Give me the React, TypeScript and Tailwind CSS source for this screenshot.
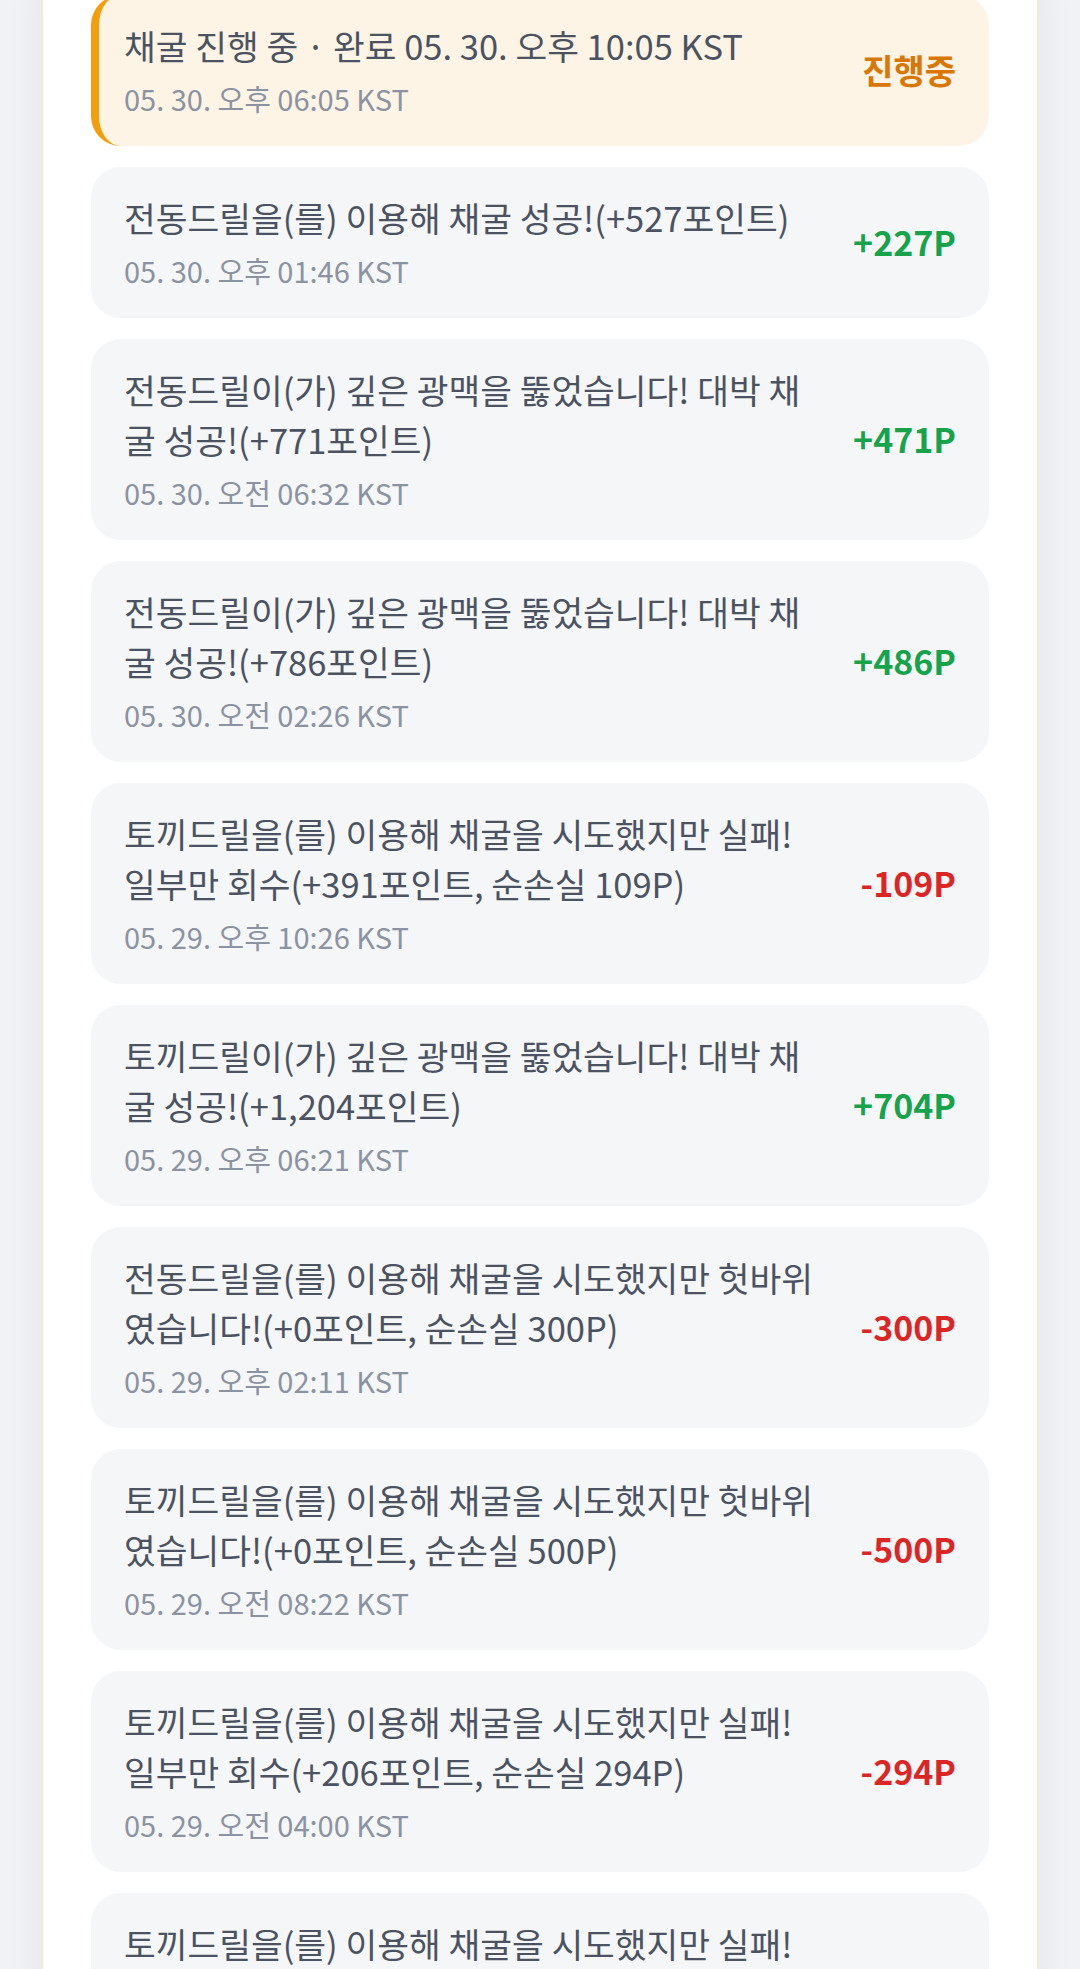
type Log = {
  id: number
  text: string
  time: string
  amount: string
  tone: 'pending' | 'plus' | 'minus'
}

const logs: Log[] = [
  { id: 1, text: '채굴 진행 중 · 완료 05. 30. 오후 10:05 KST', time: '05. 30. 오후 06:05 KST', amount: '진행중', tone: 'pending' },
  { id: 2, text: '전동드릴을(를) 이용해 채굴 성공!(+527포인트)', time: '05. 30. 오후 01:46 KST', amount: '+227P', tone: 'plus' },
  { id: 3, text: '전동드릴이(가) 깊은 광맥을 뚫었습니다! 대박 채굴 성공!(+771포인트)', time: '05. 30. 오전 06:32 KST', amount: '+471P', tone: 'plus' },
  { id: 4, text: '전동드릴이(가) 깊은 광맥을 뚫었습니다! 대박 채굴 성공!(+786포인트)', time: '05. 30. 오전 02:26 KST', amount: '+486P', tone: 'plus' },
  { id: 5, text: '토끼드릴을(를) 이용해 채굴을 시도했지만 실패! 일부만 회수(+391포인트, 순손실 109P)', time: '05. 29. 오후 10:26 KST', amount: '-109P', tone: 'minus' },
  { id: 6, text: '토끼드릴이(가) 깊은 광맥을 뚫었습니다! 대박 채굴 성공!(+1,204포인트)', time: '05. 29. 오후 06:21 KST', amount: '+704P', tone: 'plus' },
  { id: 7, text: '전동드릴을(를) 이용해 채굴을 시도했지만 헛바위였습니다!(+0포인트, 순손실 300P)', time: '05. 29. 오후 02:11 KST', amount: '-300P', tone: 'minus' },
  { id: 8, text: '토끼드릴을(를) 이용해 채굴을 시도했지만 헛바위였습니다!(+0포인트, 순손실 500P)', time: '05. 29. 오전 08:22 KST', amount: '-500P', tone: 'minus' },
  { id: 9, text: '토끼드릴을(를) 이용해 채굴을 시도했지만 실패! 일부만 회수(+206포인트, 순손실 294P)', time: '05. 29. 오전 04:00 KST', amount: '-294P', tone: 'minus' },
  { id: 10, text: '토끼드릴을(를) 이용해 채굴을 시도했지만 실패! 일부만 회수(+152포인트, 순손실 348P)', time: '05. 28. 오후 11:47 KST', amount: '-348P', tone: 'minus' },
]

function LogItem({ log }: { log: Log }) {
  const pending = log.tone === 'pending'
  return (
    <div
      className={`flex items-center gap-8 rounded-[30px] border-l-[8px] pt-[25px] pb-[27px] pl-[25px] pr-[33px] ${
        pending ? 'border-[#f59e0b] bg-[#fef4e6]' : 'border-transparent bg-[#f5f6f8]'
      }`}
    >
      <div className="min-w-0 max-w-[694px] flex-1">
        <p className="text-[34.5px] leading-[50px] text-[#4b5362]">{log.text}</p>
        <p className="mt-[8px] text-[29px] leading-[41px] text-[#8b93a2]">{log.time}</p>
      </div>
      <span
        className={`ml-auto shrink-0 text-[34px] font-bold ${
          log.tone === 'plus' ? 'text-[#16a34a]' : log.tone === 'minus' ? 'text-[#dc2626]' : 'text-[#d97706]'
        }`}
      >
        {log.amount}
      </span>
    </div>
  )
}

export default function App() {
  return (
    <div
      className="h-[1969px] overflow-hidden bg-[#f1f2f5] px-[42px]"
      style={{ fontFamily: '"Noto Sans CJK KR", "Noto Sans", sans-serif' }}
    >
      <div className="-mt-[40px] rounded-[28px] border border-[#fde7b8] bg-white px-[48px] pt-[34px] pb-12 shadow-[0_0_40px_rgba(15,23,42,0.06)]">
        <div className="flex flex-col gap-[21px]">
          {logs.map((log) => (
            <LogItem key={log.id} log={log} />
          ))}
        </div>
      </div>
    </div>
  )
}
